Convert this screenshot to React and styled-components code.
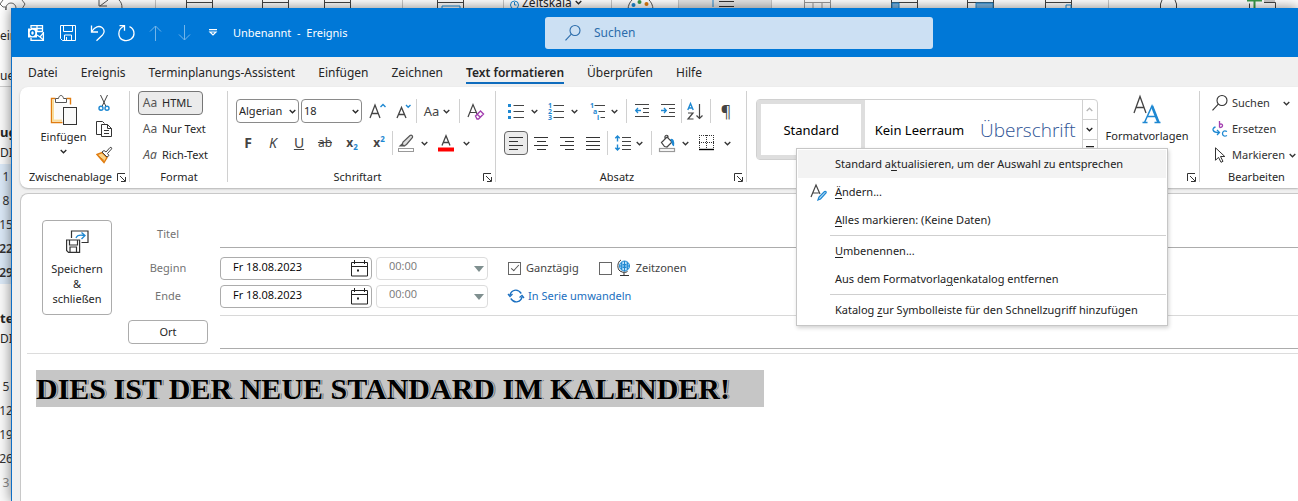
import React from "react";
import styled, { createGlobalStyle, css } from "styled-components";

const Global = createGlobalStyle`
  *, *::before, *::after { box-sizing: border-box; }
  body { margin: 0; font-family: "Noto Sans", "Segoe UI", sans-serif; font-size: 12px; line-height: 16px; color: #262626; background: #f3f3f3; }
  button, input, select { font: inherit; color: inherit; margin: 0; }
  svg { display: block; flex: none; overflow: visible; }
`;

/* ---------- desktop and windows ---------- */
const Desktop = styled.div`
  position: relative; min-height: 100vh; overflow: hidden; background: #f3f3f3;
  display: flex; flex-direction: column;
`;
const BackWindow = styled.div`
  position: absolute; inset: 0; display: flex; flex-direction: column; background: #fafafa; overflow: hidden;
`;
const BackRibbon = styled.div`
  height: 87px; flex: none; background: #fff; border-bottom: 1px solid #cfcfcf; white-space: nowrap;
`;
const BackTools = styled.div`display: flex; height: 10px; overflow: hidden;`;
const BackSlot = styled.div`
  width: ${p => p.$w}px; flex: none; height: 10px; display: flex; align-items: flex-start;
  background: ${p => (p.$on ? "#e6e6e6" : "none")};
  border-left: ${p => (p.$line ? "1px solid #c8c8c8" : "none")};
  padding-left: ${p => p.$pad || 0}px; font-size: 12px; line-height: 6px; gap: 3px;
`;
const BackLabels = styled.div`
  display: flex; flex-direction: column; gap: 24px; padding-top: 18px; width: 12px; overflow: hidden; font-size: 12px;
`;
const Agenda = styled.div`width: 12px; overflow: hidden; padding-top: 35px; display: flex; flex-direction: column;`;
const MonthName = styled.div`font-weight: 700; font-size: 13px; height: 20px; line-height: 20px;`;
const DayHead = styled.div`height: 22px; line-height: 22px; font-size: 12px;`;
const Week = styled.div`
  height: 24px; line-height: 26px; display: flex; justify-content: center; font-size: 12px;
  background: ${p => (p.$sel ? "#dbe9f7" : "none")};
  font-weight: ${p => (p.$bold ? 600 : 400)};
  color: ${p => (p.$dim ? "#8a8a8a" : "#333")};
`;
const Blank = styled.div`height: 24px;`;

const FrontWindow = styled.main`
  position: relative; flex: 1; margin: 8px 0 0 11px; display: flex; flex-direction: column;
  background: #f0f0f0; border-left: 1px solid #0f6fc5; box-shadow: 0 0 12px rgba(0,0,0,.5);
`;

/* ---------- title bar ---------- */
const TitleBar = styled.header`
  height: 49px; flex: none; background: #0078d7; color: #fff; display: flex; align-items: center;
`;
const QuickAccess = styled.div`display: flex; align-items: center; flex: 0 0 533px; padding-left: 8px;`;
const QuickButton = styled.button`
  width: ${p => p.$w || 29}px; height: 32px; padding: 0; border: 0; background: none; color: #fff;
  display: flex; align-items: center; justify-content: center; opacity: ${p => (p.disabled ? 0.45 : 1)};
`;
const WindowTitle = styled.h1`margin: 0 0 0 6px; font-size: 11px; line-height: 16px; font-weight: 400; white-space: pre;`;
const SearchBox = styled.label`
  flex: 0 1 388px; height: 32px; display: flex; align-items: center; gap: 13px; padding: 0 20px;
  background: #cce0f3; border-radius: 3px; color: #2b6cab;
`;
const SearchInput = styled.input`
  flex: 1; min-width: 0; border: 0; background: none; outline: 0; padding: 0; font-size: 12px; color: #2b6cab;
  &::placeholder { color: #2b6cab; opacity: 1; }
`;

/* ---------- tabs ---------- */
const Tabs = styled.nav`height: 30px; flex: none; display: flex; align-items: center; gap: 23px; padding: 2px 16px 0;`;
const Tab = styled.button`
  border: 0; padding: 0; background: none; height: 22px; line-height: 22px; font-size: 12px; white-space: nowrap;
  ${p => p.$active && css`font-weight: 600; border-bottom: 2px solid #0f6cbd; `}
`;

/* ---------- ribbon ---------- */
const Ribbon = styled.section`
  margin-left: 8px; height: 101px; flex: none; display: flex; background: #fff; border-radius: 8px 0 0 8px;
  box-shadow: 0 1px 2px rgba(0,0,0,.25); padding: 4px 0 6px; position: relative; z-index: 2;
`;
const Group = styled.div`
  position: relative; display: flex; flex-direction: column; height: 91px;
  flex: ${p => (p.$w ? `0 0 ${p.$w}px` : "1 1 0")}; min-width: 0;
  & + & { border-left: 1px solid #d0d0d0; }
`;
const GroupBody = styled.div`flex: 1; display: flex; align-items: flex-start; padding: ${p => p.$pad || "0"}; min-height: 0;`;
const GroupFoot = styled.div`
  height: 10px; flex: none; display: grid; grid-template-columns: 1fr ${p => (p.$launch ? "9px" : "")}; align-items: center;
  font-size: 11px; line-height: 10px; text-align: center; padding: 0 3px 0 ${p => p.$pl || 4}px; white-space: nowrap;
`;
const Launcher = styled.button`border: 0; background: none; padding: 0; width: 9px; height: 9px; color: #333;`;
const Rows = styled.div`display: flex; flex-direction: column; gap: 8px;`;
const Row = styled.div`display: flex; align-items: center; height: 24px;`;
const Divider = styled.span`width: 1px; height: 24px; background: #d0d0d0; margin: 0 ${p => p.$m || 0}px;`;
const Tool = styled.button`
  width: ${p => p.$w || 26}px; height: 24px; flex: none; padding: 0; background: none; border: 1px solid transparent; border-radius: 4px;
  display: flex; align-items: center; justify-content: ${p => (p.$left ? "flex-start" : "center")}; gap: ${p => p.$gap || 9}px; color: #333;
  font-size: 14px;
  ${p => p.$pressed && css`background: #ebebeb; border-color: #666;`}
`;
const BigButton = styled.button`
  width: ${p => p.$w}px; border: 0; background: none; padding: 4px 0 0; display: flex; flex-direction: column; align-items: center;
  font-size: 11px; gap: 3px; white-space: nowrap; line-height: 18px;
`;
const SmallStack = styled.div`display: flex; flex-direction: column; gap: 2px;`;
const FormatButton = styled.button`
  height: 24px; width: ${p => (p.$pressed ? 65 : 80)}px; padding: 0 3px; border: 1px solid ${p => (p.$pressed ? "#767676" : "transparent")};
  background: ${p => (p.$pressed ? "#ebebeb" : "none")}; border-radius: 4px; display: flex; align-items: center; gap: 4px;
  font-size: 11px; white-space: nowrap;
`;
const Sample = styled.span`font-size: 12px; width: 16px; font-style: ${p => (p.$it ? "italic" : "normal")}; color: #555;`;
const Combo = styled.span`position: relative; display: block; width: ${p => p.$w}px; height: 24px; margin-right: 2px; flex: none;
  > svg { position: absolute; right: 3px; top: 10px; pointer-events: none; }
`;
const ComboSelect = styled.select`
  appearance: none; width: 100%; height: 24px; border: 1px solid #8a8a8a; border-radius: 4px; background: #fff;
  padding: 0 12px 0 2px; font-size: 11px; line-height: 16px;
`;
const Glyph = styled.span`
  font-size: ${p => p.$s || 14}px; font-weight: ${p => (p.$b ? 700 : 400)}; font-style: ${p => (p.$i ? "italic" : "normal")};
  text-decoration: ${p => p.$d || "none"}; color: #444; line-height: 16px;
  sub, sup { font-size: 8px; line-height: 0; color: #1e88d2; font-weight: 700; }
`;
const FindLabel = styled.span`font-size: 11px; min-width: 47px; text-align: left; white-space: nowrap;`;
const PointerSlot = styled.span`width: 16px; display: flex; justify-content: center;`;

/* ---------- style gallery ---------- */
const Gallery = styled.div`
  display: flex; width: 342px; height: 61px; border: 1px solid #d0d0d0; border-radius: 4px; margin: 8px 0 0 9px; flex: none;
`;
const StyleTile = styled.button`
  flex: 1 1 0; min-width: 0; background: none; padding: 0; white-space: nowrap; overflow: hidden;
  border: 4px solid ${p => (p.$on ? "#dedede" : "transparent")};
  font-size: 13px; font-weight: 400; color: #000;
  ${p => p.$head && css`font-family: "Open Sans", sans-serif; font-size: 19px; font-weight: 300; color: #2f5496;`}
`;
const GalleryScroll = styled.div`width: 15px; border-left: 1px solid #d0d0d0; display: flex; flex-direction: column;`;
const ScrollButton = styled.button`
  flex: 1; border: 0; border-top: ${p => (p.$first ? "0" : "1px solid #d0d0d0")}; background: none; padding: 0;
  display: flex; align-items: center; justify-content: center; color: ${p => (p.$first ? "#b5b5b5" : "#222")};
`;
const Menu = styled.div`
  position: absolute; left: 49px; top: 57px; width: 372px; padding: 1px; background: #fff; border: 1px solid #c6c6c6;
  box-shadow: 1px 2px 4px rgba(0,0,0,.18); z-index: 5;
`;
const MenuItem = styled.button`
  width: 100%; height: 28px; display: flex; align-items: center; border: 0; padding: 0; text-align: left; white-space: pre;
  background: ${p => (p.$hot ? "#f3f3f3" : "#fff")}; font-size: 11px; color: #222;
  u { text-underline-offset: 2px; }
`;
const MenuIcon = styled.span`width: 37px; flex: none; display: flex; justify-content: center; padding-left: 4px;`;
const MenuLine = styled.hr`border: 0; height: 1px; margin: 1px 0 1px 32px; background: #cfcfcf;`;

/* ---------- form ---------- */
const Panel = styled.section`
  flex: 1; margin: 5px 0 0 8px; background: #fff; border: 1px solid #c8c8c8; border-width: 1px 0 0 1px; border-radius: 8px 0 0 0;
`;
const Form = styled.form`display: flex; padding: 26px 0 4px 15px; margin-left: 6px; border-bottom: 1px solid #dcdcdc;`;
const SaveButton = styled.button`
  width: 70px; height: 95px; flex: none; background: #fff; border: 1px solid #acacac; border-radius: 4px; padding: 9px 0 8px;
  display: flex; flex-direction: column; align-items: center; justify-content: space-between; font-size: 11px; line-height: 15px; text-align: center;
`;
const Fields = styled.div`flex: 1; margin-left: 16px; display: flex; flex-direction: column; min-width: 0;`;
const FieldRow = styled.div`display: flex; align-items: center; height: ${p => p.$h || 28}px; margin-bottom: ${p => p.$mb || 0}px;`;
const FieldLabel = styled.label`width: 80px; flex: none; text-align: center; color: #737373; font-size: 11px;`;
const LineInput = styled.input`
  flex: 1; margin-left: 12px; min-width: 0; height: 100%; border: 0; border-bottom: 1px solid #acacac; background: none; outline: 0;
  border-top: ${p => (p.$top ? "1px solid #d8d8d8" : "0")};
`;
const PlaceButton = styled.button`width: 80px; height: 24px; border: 1px solid #acacac; border-radius: 4px; background: #fff; padding: 0; font-size: 11px;`;
const DateBox = styled.span`
  width: 152px; height: 23px; margin-left: 12px; border: 1px solid #acacac; border-radius: 4px; display: flex; align-items: center; padding: 0 3px 0 12px;
`;
const DateInput = styled.input`flex: 1; min-width: 0; border: 0; padding: 0 0 4px; background: none; outline: 0; font-family: "Open Sans", sans-serif; font-size: 11px; color: #000; height: 20px;`;
const TimeBox = styled.span`
  position: relative; width: 112px; height: 23px; margin-left: 4px;
  > svg { position: absolute; right: 4px; top: 9px; pointer-events: none; }
`;
const TimeSelect = styled.select`
  appearance: none; width: 100%; height: 23px; border: 1px solid #dcdcdc; border-radius: 4px; background: #fff;
  padding: 0 0 4px 12px; font-family: "Open Sans", sans-serif; font-size: 11px; color: #777;
`;
const Check = styled.label`display: flex; align-items: center; gap: 5px; margin-left: 20px; font-size: 11px; color: #444; white-space: nowrap;`;
const CheckInput = styled.input`
  appearance: none; width: 13px; height: 13px; border: 1px solid #666; background: #fff; display: grid; place-items: center;
  &:checked::after { content: ""; width: 4px; height: 8px; border: solid #555; border-width: 0 1px 1px 0; transform: rotate(42deg); margin-top: -2px; }
`;
const SeriesLink = styled.a`display: flex; align-items: center; gap: 4px; margin-left: 20px; color: #1a6fc0; text-decoration: none; font-size: 11px;`;
const Body = styled.div`padding: 16px 15px;`;
const Message = styled.p`
  display: inline-block; margin: 0; background: #c6c6c6; color: #000; padding-right: 34px; white-space: nowrap;
  font: 700 30px/37px "Liberation Serif", serif; text-shadow: 1px 0 #c6c6c6, 2px 0 #777;
`;

/* ---------- icons ---------- */
const Ico = ({ w = 16, h = 16, c = "currentColor", sw = 1, children }) => (
  <svg width={w} height={h} viewBox={`0 0 ${w} ${h}`} fill="none" stroke={c} strokeWidth={sw} aria-hidden="true">{children}</svg>
);
const Chev = ({ up }) => <Ico w={7} h={5} sw={1.3}><path d={up ? "M.7 4l2.8-2.8L6.3 4" : "M.7 1l2.8 2.8L6.3 1"} /></Ico>;
const B = "#1e88d2";

const Outlook = () => (
  <Ico w={16} h={16} sw={1.3}><path d="M3 3V.7h11.500V7M15.400 7v8.400H3V13M3 3.500h11M9 .7v6M9 6.500h5.500" /><path d="M9 10l3 2 3.400-4M11.500 11.500l4 3.500" />
    <rect x="0" y="3.500" width="9" height="9" fill="#fff" stroke="none" /><ellipse cx="4.500" cy="8" rx="2" ry="2.400" stroke="#0078d7" strokeWidth="1.500" /></Ico>);
const Save = () => <Ico><path d="M.5.5h15v15h-13l-2-2zM3.500.5v6h9v-6M4.500 15v-5h7v5M6.500 12v3" /></Ico>;
const Undo = () => <Ico sw={1.300}><path d="M1.500.5v6.500h6.500M1.800 6.500C5 1.500 9 .5 12 2.500c3 2.200 2.500 5.500.5 7.500l-6 5.700" /></Ico>;
const Redo = () => <Ico w={17} sw={1.300}><path d="M1.500.7h5v5M6.300 1C-1 4-1 14 6.500 15.500c5 1 9.500-2.500 9.500-7 0-3-2-5.700-4.500-6.800" /></Ico>;
const Arrow = ({ down }) => <Ico w={13}><path d={down ? "M6.500 0v15M1 9.500l5.500 5.500L12 9.500" : "M6.500 16V1M1 6.500L6.500 1 12 6.500"} /></Ico>;
const More = () => <Ico w={8} h={7} sw={1.200}><path d="M0 .6h8M1 3l3 3 3-3z" /></Ico>;
const Lens = () => <Ico sw={1.1}><circle cx="10" cy="5.500" r="5" /><path d="M6.300 9.200L.5 15.300" /></Ico>;
const Corner = () => <Ico w={9} h={9}><path d="M.5 8V.5H8M3 3l5 5M8.500 4v4.500H4" /></Ico>;

const Paste = () => (
  <Ico w={27} h={30} c="#555"><path d="M5.500 3.500h-4v24h11M16.500 3.500h4v6" stroke="#e07c10" strokeWidth="1.400" /><path d="M3 5v20.500h9" stroke="#f9dc9a" strokeWidth="2" />
    <path d="M4.500 6h14v4M4.500 6v18h8V12h6V6" fill="#fafafa" stroke="none" /><path d="M5.500 7.500v-4h3c.5-4 4.500-4 5 0h3v4z" fill="#fff" /><rect x="13.500" y="12.500" width="13" height="17" fill="#fafafa" stroke="#333" /></Ico>);
const Cut = () => <Ico c="#444"><path d="M4.500 0l5.500 11.500M11.500 0L6 11.500" /><g stroke={B} strokeWidth="1.400"><circle cx="5" cy="13.200" r="2" /><circle cx="11" cy="13.200" r="2" /></g></Ico>;
const Copy = () => <Ico c="#333"><path d="M6 13.500H.5V.5h6l2 2M5.500 3.500h6l4 4v8h-10zM11.500 3.500v4h4M8 9.500h5M8 12.500h5" /></Ico>;
const Brush = () => <Ico><path d="M1 7.500l5-2 5 5-3 5z" fill="#fbd58a" stroke="#e07c10" strokeWidth="1.400" /><path d="M3 9.500l5 4" stroke="#e07c10" /><path d="M6 5l2-1.500L10 5l4-4.500c1.500-.5 2 .5 1.500 1.500L11.500 6.500l1.500 2-2 1.500z" fill="#fff" stroke="#444" /></Ico>;
const Letter = ({ small, up }) => <Ico w={17} h={17} c="#444" sw={1.300}>{small ? <path d="M2 15L6.500 4.500 11 15M3.500 11.500h6" /> : <path d="M1 15L6 2l5 13M2.700 10.500h6.600" />}
  <path d={up ? "M11.500 4L14 1.500 16.500 4" : "M11 2l2.200 2.200L15.500 2"} stroke={B} strokeWidth="1.400" /></Ico>;
const Eraser = () => <Ico w={17} h={17} c="#444" sw={1.200}><path d="M1 14L6 1.500 10 11M2.700 9.500h6" /><path d="M8.500 13l5-5 3 3-5 5h-1.500zM10 11l3 3" stroke="#a33fb0" fill="#fff" strokeWidth="1.400" /></Ico>;
const Marker = () => <Ico w={17} h={17} c="#555"><path d="M4 10l1-3 7-6.500c1.500-1 3 .5 2.500 2L8.500 9.500 6 11zM2 11h4l-2-2z" fill="#ddd" strokeWidth="1.200" /><rect x=".5" y="13.500" width="15" height="3" fill="#fff" stroke="#999" /></Ico>;
const FontColor = () => <Ico w={16} h={17} c="#444" sw={1.300}><path d="M4 10.500L8 .8l4 9.700M5.300 7.500h5.400" /><path d="M0 14.500h16" stroke="#f00" strokeWidth="4" /></Ico>;
const Bullets = () => <Ico c="#444"><path d="M5.500 2.500H16M5.500 8.500H16M5.500 14.500H16" /><path d="M0 2.500h3M0 8.500h3M0 14.500h3" stroke={B} strokeWidth="3" /></Ico>;
const Num = styled.text`font: 700 7px "Open Sans", sans-serif; fill: #1e88d2; stroke: none;`;
const Numbers = () => <Ico c="#444"><path d="M5.500 2.500H16M5.500 8.500H16M5.500 14.500H16" /><Num x="0" y="5">1</Num><Num x="0" y="11">2</Num><Num x="0" y="17">3</Num></Ico>;
const Multi = () => <Ico c="#444"><path d="M4.500 2.500H15M8.500 8.500H15M10.500 14.500H15" /><Num x="0" y="5">1</Num><Num x="3" y="11">a</Num><Num x="7" y="17">i</Num></Ico>;
const Indent = ({ out }) => <Ico w={14} c="#444"><path d="M0 1.500h14M8 5.500h6M8 9.500h6M0 13.500h14" /><path d={out ? "M6 7.500H.7M3 5L.7 7.500 3 10" : "M0 7.500h5.300M3 5l2.300 2.500L3 10"} stroke={B} strokeWidth="1.300" /></Ico>;
const Sort = () => <Ico w={17} h={17} c="#444" sw={1.200}><path d="M.8 7l2.700-6.500L6.200 7M1.800 5h3.400" stroke={B} strokeWidth="1.400" /><path d="M1 10h5l-5 6h5.500M12.500 1v14.500M9.500 12.500l3 3 3-3" /></Ico>;
const Align = ({ k }) => {
  const d = { l: "M0 1.500h14M0 5.500h9M0 9.500h14M0 13.500h9", c: "M0 1.500h14M3 5.500h9M0 9.500h14M3 13.500h9", r: "M0 1.500h14M5 5.500h9M0 9.500h14M5 13.500h9", j: "M0 1.500h14M0 5.500h14M0 9.500h14M0 13.500h14" }[k];
  return <Ico w={14} h={15} c="#333"><path d={d} /></Ico>;
};
const Spacing = () => <Ico c="#444"><path d="M7 2.500h9M7 6.500h9M7 10.500h9M7 14.500h9" /><path d="M2.500 1v5.500M.3 3.300L2.500 1l2.200 2.300M2.500 9.500V15M.3 12.700L2.500 15l2.200-2.300" stroke={B} strokeWidth="1.400" /></Ico>;
const Bucket = () => <Ico w={17} h={17} c="#444" sw={1.200}><path d="M2.500 7.500L8 2l5 5-5 5-2.500-.5zM6 5V1.500C6.500-.3 9 0 9 1.500V4" /><path d="M12 4.500c2-.5 3 1.500 2.500 6-1.500-.5-1-4-2.500-6z" fill={B} stroke={B} /><rect x=".5" y="13.500" width="15" height="3" fill="#fff" stroke="#999" /></Ico>;
const Borders = () => <Ico w={16} c="#333"><path d="M0 .5h15M0 7.500h15M.5 0v14M7.500 0v14M14.500 0v14" strokeDasharray="1 1" /><path d="M0 14.500h15" stroke="#000" strokeWidth="1.400" /></Ico>;
const Styles = () => <Ico w={28} h={29} sw={1.500} c="#444"><path d="M1 18L7 1.500 13 18M3.200 12.500h7.600" strokeWidth="1.300" /><path d="M11.500 27.500L19 11l6.500 16.500M14 21.500h9.500M9.500 27.500h5M21.500 27.500h6" stroke={B} /><path d="M19 11l6.500 16.500" stroke={B} strokeWidth="2.600" /></Ico>;
const Replace = () => <Ico c={B} sw={1.300}><path d="M3.500 6C-.5 7 0 12 7 11.500M5 9l2.500 2.500L5 14M15 10.500c-3-1.500-4.500 0-4.500 2s1.500 3.500 4.500 2" /><path d="M7.500 0v6.500M7.500 3.500c3-2 5 3 0 3" stroke="#a33fb0" /></Ico>;
const Pointer = () => <Ico w={12} h={16} c="#333"><path d="M1.500.8v12.500l3-3 2.500 5 2-1-2.500-4.800h4.300z" /></Ico>;
const EditStyle = () => <Ico w={17} h={17} c="#444" sw={1.200}><path d="M1 13L6 1l4 9M2.700 9h6" /><path d="M8 16l1-3 5.500-5.500c1.500-.5 2 .5 1.500 1.500L10.500 15z" stroke={B} strokeWidth="1.300" fill="#bfe0f7" /></Ico>;
const SaveClose = () => <Ico w={23} h={23} c="#333" sw={1.200}><path d="M5.500 8V1h16.500v11.500h-6.500" /><path d="M10 8c1-3 4-3.500 8.500-2.500M15.500 2.500l3.500 3-3.500 3.500" stroke={B} strokeWidth="1.300" /><path d="M.6 10h13v12.400H2.500L.6 20.500zM3.500 10v5h8v-5M4 22v-5h6.500v5" /></Ico>;
const Calendar = () => <Ico w={17} h={17} c="#222"><path d="M.5 2.500h16v13.500H.5zM.5 6.500h16M3.500 0v4M13.500 0v4" /><path d="M6 10.500h2" strokeWidth="2" /></Ico>;
const Globe = () => <Ico w={14} h={16}><circle cx="7.500" cy="6" r="5" fill="#bfe3fa" stroke={B} /><path d="M3 6h9.500M7.500 1v10.500M4 3.500c2 1.500 5 1.500 7 0M4 8.500c2-1.500 5-1.500 7 0M5 2c-1 3-1 5 0 8M10 2c1 3 1 5 0 8" stroke={B} /><path d="M4 0C0 2 0 9 3 11s6 1.500 7.500.5M7 12.500v3M3 15.500h9" stroke="#333" /></Ico>;
const Series = () => <Ico c="#1a6fc0" sw={1.300}><path d="M2 7C3 2.500 9-.5 13.300 5.500M14 9c-1 4.500-7 7.500-11.300 1.500M0 6l2 2.500L4.500 6M11.500 9.500L14 7.500l2 2.500" /></Ico>;

/* upper parts of the toolbar drawings of the window behind */
const Gear = () => <Ico w={26} h={22} c="#666"><circle cx="11" cy="8" r="5" /><path d="M1 -4l2 4-3 4 3 3h3l-1 6 2 3 4-1 3 3 4-3v-5l4-1 3-5-3-4 2-4" /></Ico>;
const Sheet = ({ side, c = "#444" }) => <Ico w={27} h={10} c={c}><path d="M.5 0v10M26.500 0v10M0 2.500h27" />
  {side === "left" && <path d="M1 3h7v7H1z" fill="#7db7e4" stroke={B} />}{side === "full" && <path d="M9 3h17v7H9z" fill="#7db7e4" stroke={B} />}
  {side === "right" && <path d="M21 10V5h5v5" stroke={B} />}{side === "low" && <path d="M5 10V6h18v4" stroke={B} />}{side === "grid" && <path d="M9 3v7M18 3v7" />}</Ico>;
const Arc = () => <Ico w={26} h={10} c="#555"><path d="M1 0v6h8M2 6L10 0M21 0c2 2 3 4 3 8" /></Ico>;
const Clock = () => <Ico w={9} h={9} c={B}><circle cx="4.500" cy="5" r="4" /><path d="M4.500 2v3h2" /></Ico>;
const Palette = () => <Ico w={27} h={10} c="#555"><path d="M1 10C1 5 3 2 5 0M22 0c2 2 4 5 4 10" /><g stroke="none"><circle cx="6.500" cy="5" r="2" fill={B} /><circle cx="12.500" cy="2" r="2" fill="#3a9b4b" /><circle cx="19.500" cy="4" r="2" fill="#e07c10" /></g></Ico>;
const ListMark = () => <Ico w={25} h={10} c="#333"><path d="M-2 0v7" stroke={B} /><path d="M4 1.500h15M4 6.500h15" /></Ico>;
const Drop = () => <Ico w={18} h={10} c="#444"><path d="M.5 8V4L2 0M15 0l1.500 4v4" /></Ico>;
const GreenCross = () => <Ico w={30} h={10} c="#3a9b4b" sw={2}><path d="M0 .5h15M7.500 0v10" /><path d="M17 1h11" stroke="#ccc" strokeWidth="3" /><path d="M17 2.500h11.500V8M2.500 3.500V8" stroke="#444" strokeWidth="1" /></Ico>;

const backSlots = [
  { w: 98, el: <Gear /> }, { w: 57, el: <Arc /> }, { w: 31, line: 1 }, { w: 76, el: <Sheet /> }, { w: 62, el: <Sheet /> }, { w: 78, el: <Sheet /> },
  { w: 101, line: 1, pad: 34, el: <Sheet side="low" /> }, { w: 108, line: 1, pad: 6, el: <><Clock />Zeitskala<Chev /></> },
  { w: 67, line: 1, pad: 15, el: <Palette /> }, { w: 93, on: 1, line: 1, pad: 36, el: <ListMark /> }, { w: 120, line: 1, pad: 32, el: <Sheet side="grid" c="#999" /> },
  { w: 76, el: <Sheet side="left" /> }, { w: 78, el: <Sheet side="full" /> }, { w: 63, el: <Sheet side="right" /> }, { w: 139, line: 1, pad: 51, el: <Drop /> }, { w: 50, el: <GreenCross /> },
];
const Weeks = ({ days, ...p }) => days.map(d => <Week key={d} $bold={d === 22 || d === 29} {...p}>{d}</Week>);

const Foot = ({ children, name = children, launch = true, pl }) => (
  <GroupFoot $launch={launch} $pl={pl}><span>{children}</span>{launch && <Launcher type="button" aria-label={`${name} Optionen`}><Corner /></Launcher>}</GroupFoot>
);
const MenuRow = ({ icon, hot, children }) => <MenuItem type="button" role="menuitem" $hot={hot}><MenuIcon>{icon}</MenuIcon><span>{children}</span></MenuItem>;
const When = ({ id, label, mb, children }) => (
  <FieldRow $mb={mb}>
    <FieldLabel htmlFor={id}>{label}</FieldLabel>
    <DateBox><DateInput id={id} defaultValue="Fr 18.08.2023" /><Calendar /></DateBox>
    <TimeBox><TimeSelect aria-label={`${label} Uhrzeit`}><option>00:00</option></TimeSelect><svg width="10" height="6" fill="#7f8f8f"><path d="M0 0h10L5 6z" /></svg></TimeBox>
    {children}
  </FieldRow>
);

export default function App() {
  return (
    <Desktop>
      <Global />
      <BackWindow aria-hidden="true">
        <BackRibbon>
          <BackTools>{backSlots.map((s, i) => <BackSlot key={i} $w={s.w} $line={s.line} $pad={s.pad} $on={s.on}>{s.el}</BackSlot>)}</BackTools>
          <BackLabels><span>ein</span><span>uer</span></BackLabels>
        </BackRibbon>
        <Agenda>
          <MonthName>ug</MonthName><DayHead>DI</DayHead>
          <Weeks days={[1, 8, 15, 22, 29]} $sel />
          <Blank /><MonthName>te</MonthName><DayHead>DI</DayHead><Blank />
          <Weeks days={[5, 12, 19, 26]} /><Weeks days={[3]} $dim />
        </Agenda>
      </BackWindow>

      <FrontWindow>
        <TitleBar>
          <QuickAccess>
            <QuickButton type="button" aria-label="Outlook" $w={32}><Outlook /></QuickButton>
            <QuickButton type="button" aria-label="Speichern" $w={32}><Save /></QuickButton>
            <QuickButton type="button" aria-label="Rückgängig" $w={28}><Undo /></QuickButton>
            <QuickButton type="button" aria-label="Wiederholen"><Redo /></QuickButton>
            <QuickButton type="button" aria-label="Vorheriges Element" disabled><Arrow /></QuickButton>
            <QuickButton type="button" aria-label="Nächstes Element" disabled $w={28}><Arrow down /></QuickButton>
            <QuickButton type="button" aria-label="Anpassen"><More /></QuickButton>
            <WindowTitle>{"Unbenannt  -  Ereignis"}</WindowTitle>
          </QuickAccess>
          <SearchBox><Lens /><SearchInput placeholder="Suchen" aria-label="Suchen" /></SearchBox>
        </TitleBar>
        <Tabs>
          {["Datei", "Ereignis", "Terminplanungs-Assistent", "Einfügen", "Zeichnen", "Text formatieren", "Überprüfen", "Hilfe"].map(t => (
            <Tab key={t} type="button" $active={t === "Text formatieren"}>{t}</Tab>
          ))}
        </Tabs>

        <Ribbon>
          <Group $w={109}>
            <GroupBody $pad="0 0 0 16px">
              <BigButton type="button" $w={55}><Paste /><span>Einfügen</span><Chev /></BigButton>
              <SmallStack>
                <Tool type="button" aria-label="Ausschneiden"><Cut /></Tool>
                <Tool type="button" aria-label="Kopieren"><Copy /></Tool>
                <Tool type="button" aria-label="Format übertragen"><Brush /></Tool>
              </SmallStack>
            </GroupBody>
            <Foot>Zwischenablage</Foot>
          </Group>
          <Group $w={98}>
            <GroupBody $pad="0 0 0 8px">
              <SmallStack>
                <FormatButton type="button" $pressed><Sample>Aa</Sample>HTML</FormatButton>
                <FormatButton type="button"><Sample>Aa</Sample>Nur Text</FormatButton>
                <FormatButton type="button"><Sample $it>Aa</Sample>Rich-Text</FormatButton>
              </SmallStack>
            </GroupBody>
            <Foot launch={false}>Format</Foot>
          </Group>
          <Group $w={268}>
            <GroupBody $pad="8px 0 0 8px">
              <Rows>
                <Row>
                  <Combo $w={63}><ComboSelect aria-label="Schriftart"><option>Algerian</option></ComboSelect><Chev /></Combo>
                  <Combo $w={61}><ComboSelect aria-label="Schriftgrad"><option>18</option></ComboSelect><Chev /></Combo>
                  <Tool type="button" aria-label="Größer"><Letter up /></Tool>
                  <Tool type="button" aria-label="Kleiner"><Letter small /></Tool>
                  <Divider />
                  <Tool type="button" aria-label="Groß-/Kleinschreibung" $w={40} $gap={4}><Glyph $s={13}>Aa</Glyph><Chev /></Tool>
                  <Divider $m={2} />
                  <Tool type="button" aria-label="Formatierung löschen"><Eraser /></Tool>
                </Row>
                <Row>
                  <Tool type="button" $w={24}><Glyph $b>F</Glyph></Tool>
                  <Tool type="button"><Glyph $i>K</Glyph></Tool>
                  <Tool type="button"><Glyph $d="underline">U</Glyph></Tool>
                  <Tool type="button"><Glyph $s={12} $d="line-through">ab</Glyph></Tool>
                  <Tool type="button" $w={28}><Glyph $b $s={12}>x<sub>2</sub></Glyph></Tool>
                  <Tool type="button"><Glyph $b $s={12}>x<sup>2</sup></Glyph></Tool>
                  <Divider />
                  <Tool type="button" aria-label="Hervorheben" $w={40} $gap={6}><Marker /><Chev /></Tool>
                  <Tool type="button" aria-label="Schriftfarbe" $w={42}><FontColor /><Chev /></Tool>
                </Row>
              </Rows>
            </GroupBody>
            <Foot>Schriftart</Foot>
          </Group>
          <Group $w={251}>
            <GroupBody $pad="8px 0 0 8px">
              <Rows>
                <Row>
                  <Tool type="button" aria-label="Aufzählung" $w={38} $gap={7}><Bullets /><Chev /></Tool>
                  <Tool type="button" aria-label="Nummerierung" $w={42} $gap={7}><Numbers /><Chev /></Tool>
                  <Tool type="button" aria-label="Liste mit mehreren Ebenen" $w={40} $gap={5}><Multi /><Chev /></Tool>
                  <Divider $m={2} />
                  <Tool type="button" aria-label="Einzug verkleinern"><Indent out /></Tool>
                  <Tool type="button" aria-label="Einzug vergrößern"><Indent /></Tool>
                  <Divider />
                  <Tool type="button" aria-label="Sortieren"><Sort /></Tool>
                  <Divider $m={2} />
                  <Tool type="button" aria-label="Absatzmarken"><Glyph $s={16}>¶</Glyph></Tool>
                </Row>
                <Row>
                  <Tool type="button" aria-label="Linksbündig" $w={24} $pressed><Align k="l" /></Tool>
                  <Tool type="button" aria-label="Zentriert"><Align k="c" /></Tool>
                  <Tool type="button" aria-label="Rechtsbündig"><Align k="r" /></Tool>
                  <Tool type="button" aria-label="Blocksatz"><Align k="j" /></Tool>
                  <Divider $m={1} />
                  <Tool type="button" aria-label="Zeilenabstand" $w={40} $gap={5}><Spacing /><Chev /></Tool>
                  <Divider $m={2} />
                  <Tool type="button" aria-label="Schattierung" $w={40} $gap={6}><Bucket /><Chev /></Tool>
                  <Tool type="button" aria-label="Rahmen" $w={42}><Borders /><Chev /></Tool>
                </Row>
              </Rows>
            </GroupBody>
            <Foot>Absatz</Foot>
          </Group>
          <Group>
            <GroupBody>
              <Gallery>
                <StyleTile type="button" $on>Standard</StyleTile>
                <StyleTile type="button">Kein Leerraum</StyleTile>
                <StyleTile type="button" $head>Überschrift</StyleTile>
                <GalleryScroll>
                  <ScrollButton type="button" aria-label="Nach oben" $first><Chev up /></ScrollButton>
                  <ScrollButton type="button" aria-label="Nach unten"><Chev /></ScrollButton>
                  <ScrollButton type="button" aria-label="Weitere"><More /></ScrollButton>
                </GalleryScroll>
              </Gallery>
              <BigButton type="button" $w={98}><Styles /><span>Formatvorlagen</span></BigButton>
            </GroupBody>
            <Foot name="Formatvorlagen" />
            <Menu role="menu">
              <MenuRow hot>Standard a<u>k</u>tualisieren, um der Auswahl zu entsprechen</MenuRow>
              <MenuRow icon={<EditStyle />}><u>Ä</u>ndern...</MenuRow>
              <MenuRow><u>A</u>lles markieren: (Keine Daten)</MenuRow>
              <MenuLine />
              <MenuRow><u>U</u>mbenennen...</MenuRow>
              <MenuRow>Aus dem Formatvorla<u>g</u>enkatalog entfernen</MenuRow>
              <MenuLine />
              <MenuRow>Katalog <u>z</u>ur Symbolleiste für den Schnellzugriff hinzufügen</MenuRow>
            </Menu>
          </Group>
          <Group $w={99}>
            <GroupBody $pad="0 0 0 11px">
              <SmallStack>
                <Tool type="button" $w={86} $left $gap={4}><Lens /><FindLabel>Suchen</FindLabel><Chev /></Tool>
                <Tool type="button" $w={86} $left $gap={4}><Replace /><FindLabel>Ersetzen</FindLabel></Tool>
                <Tool type="button" $w={86} $left $gap={4}><PointerSlot><Pointer /></PointerSlot><FindLabel>Markieren</FindLabel><Chev /></Tool>
              </SmallStack>
            </GroupBody>
            <Foot launch={false} pl={18}>Bearbeiten</Foot>
          </Group>
        </Ribbon>

        <Panel>
          <Form onSubmit={e => e.preventDefault()}>
            <SaveButton type="submit"><SaveClose /><span>Speichern<br />&amp;<br />schließen</span></SaveButton>
            <Fields>
              <FieldRow $mb={6}><FieldLabel htmlFor="title">Titel</FieldLabel><LineInput id="title" /></FieldRow>
              <When id="start" label="Beginn">
                <Check><CheckInput type="checkbox" defaultChecked />Ganztägig</Check>
                <Check><CheckInput type="checkbox" /><Globe />Zeitzonen</Check>
              </When>
              <When id="end" label="Ende" mb={5}><SeriesLink href="#serie"><Series />In Serie umwandeln</SeriesLink></When>
              <FieldRow $h={34}><PlaceButton type="button">Ort</PlaceButton><LineInput $top aria-label="Ort" /></FieldRow>
            </Fields>
          </Form>
          <Body><Message>DIES IST DER NEUE STANDARD IM KALENDER!</Message></Body>
        </Panel>
      </FrontWindow>
    </Desktop>
  );
}
